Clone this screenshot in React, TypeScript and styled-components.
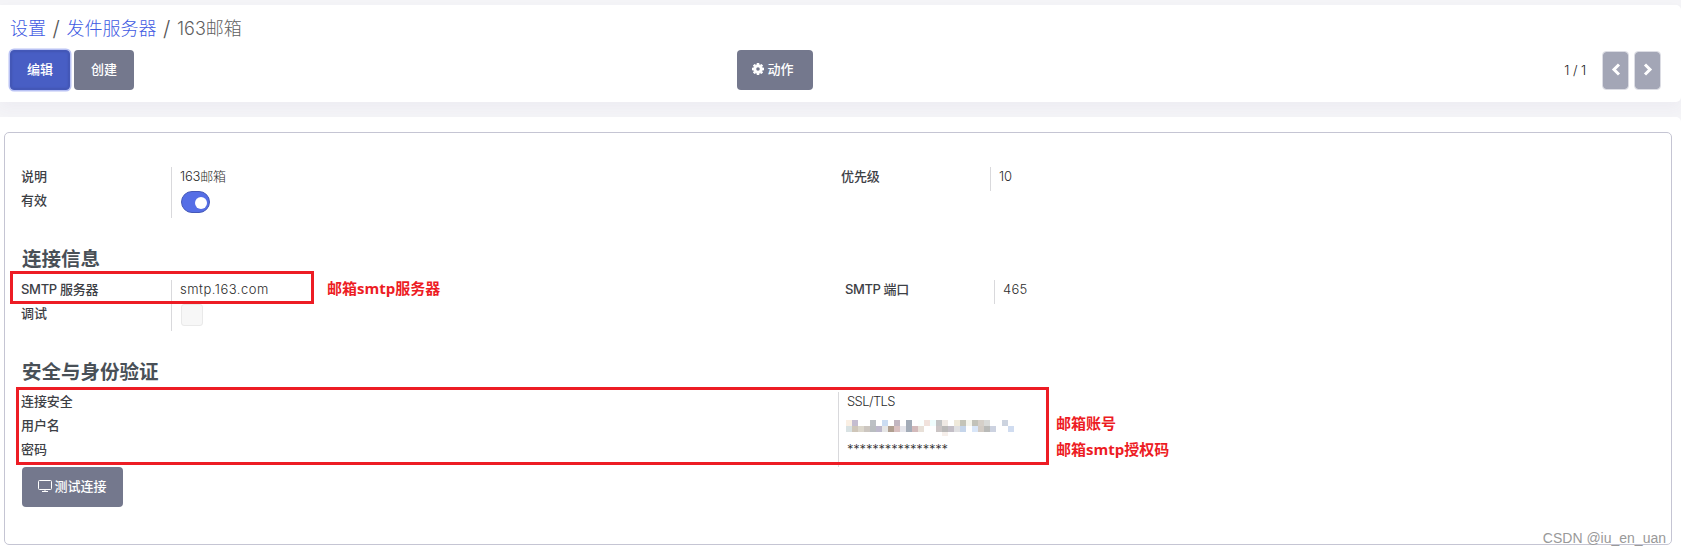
import React from "react";
import styled, { createGlobalStyle, css } from "styled-components";

const Global = createGlobalStyle`
  * { box-sizing: border-box; }
  body {
    margin: 0;
    background: #f4f4f7;
    color: #4b4f56;
    font: 300 13px/24px Inter, "Noto Sans CJK SC", sans-serif;
  }
`;

const Page = styled.div`
  height: 554px;
  padding-top: 5px;
  position: relative;
  overflow: hidden;
`;

const Header = styled.header`
  height: 97px;
  padding: 9px 20px 0 10px;
  background: #fff;
  border-radius: 0 5px 5px 0;
  box-shadow: 0 6px 14px rgba(90, 80, 140, 0.045);
`;

const Breadcrumb = styled.nav`
  display: flex;
  height: 28px;
  font-size: 18px;
  line-height: 29px;
  color: #5f5f5f;
  white-space: pre;
`;

const Crumb = styled.a`
  color: #4059e2;
`;

const Slash = styled.span`
  width: 20.5px;
  text-align: center;
  color: #555;
  font-size: 21px;
`;

const Toolbar = styled.div`
  display: grid;
  grid-template-columns: 727px 1fr auto;
  margin-top: 8px;
  height: 40px;
  align-items: center;
`;

const Buttons = styled.div<{ $indent?: number }>`
  display: flex;
  gap: 4px;
  margin-left: ${(p) => p.$indent ?? 0}px;
`;

const Button = styled.button<{ $primary?: boolean; $width: number }>`
  display: flex;
  align-items: center;
  justify-content: center;
  gap: 3px;
  width: ${(p) => p.$width}px;
  height: 40px;
  padding: 0 0 3px;
  border: 0;
  border-radius: 4px;
  background: #74788d;
  color: #fff;
  font: 500 13px/20px Inter, "Noto Sans CJK SC", sans-serif;
  ${(p) =>
    p.$primary &&
    css`
      background: #485ec4;
      border: 1px solid #4458b8;
      box-shadow: 0 0 0 1.5px #b9c2f4, inset 0 0 2px 1px #4256b2;
    `}
`;

const ActionButton = styled(Button)`
  padding-right: 4px;
`;

const TestButton = styled(Button)`
  gap: 1px;
  padding-right: 0;
`;

const Pager = styled.div`
  display: flex;
  align-items: center;
  gap: 5px;
`;

const PagerCount = styled.span`
  margin-right: 11px;
  color: #222;
  word-spacing: -0.2px;
`;

const PagerButton = styled.button`
  display: flex;
  align-items: center;
  justify-content: center;
  width: 27px;
  height: 39px;
  padding: 0 0 2px;
  border: 1px solid #dcdde4;
  border-radius: 4px;
  background: #a3a6b6;
  background-clip: padding-box;
`;

const Content = styled.main`
  height: 437px;
  margin-top: 15px;
  padding: 15px 9px 0 4px;
  background: #fff;
  border-radius: 0 5px 0 0;
  position: relative;
`;

const Sheet = styled.section`
  height: 413px;
  padding: 34px 16px 0 15px;
  border: 1px solid #c5c5d3;
  border-radius: 5px;
`;

const Columns = styled.div<{ $height: number; $left: number }>`
  display: grid;
  grid-template-columns: ${(p) => p.$left}px 1fr;
  align-items: start;
  height: ${(p) => p.$height}px;
`;

const Fields = styled.dl<{ $label: number }>`
  display: grid;
  grid-template-columns: ${(p) => p.$label}px 1fr;
  margin: 0;
`;

const Label = styled.dt`
  height: 24px;
  padding-left: 1px;
  line-height: 19px;
  font-weight: 500;
  letter-spacing: -0.1px;
  color: #3d4045;
`;

const Value = styled.dd<{ $tall?: boolean }>`
  height: ${(p) => (p.$tall ? 27 : 24)}px;
  margin: 0;
  padding-left: 8px;
  border-left: 1px solid #d9d9dc;
  line-height: 19px;
  color: #2c2c2c;
`;

const Text = styled.span<{ $spacing?: number }>`
  letter-spacing: ${(p) => p.$spacing ?? 0}px;
`;

const Title = styled.h2<{ $height: number }>`
  height: ${(p) => p.$height}px;
  margin: 0;
  padding: 3px 0 0 2px;
  font-size: 19.5px;
  line-height: 24px;
  font-weight: 700;
  color: #495057;
`;

const Switch = styled.span`
  display: flex;
  justify-content: flex-end;
  align-items: center;
  width: 29px;
  height: 22px;
  margin-left: 1px;
  padding-right: 2px;
  border: 1px solid #4659b8;
  border-radius: 11px;
  background: #556ee6;
`;

const Knob = styled.span`
  width: 12px;
  height: 12px;
  margin-top: 2px;
  border-radius: 50%;
  background: #fff;
`;

const Checkbox = styled.span`
  display: block;
  width: 22px;
  height: 22px;
  margin-left: 1px;
  border: 1px solid #e9e9e9;
  border-radius: 3px;
  background: #f7f7f7;
`;

const Mosaic = styled.svg`
  display: block;
  margin: 4px 0 0 -1px;
`;

const Highlight = styled.div<{ $x: number; $y: number; $w: number; $h: number }>`
  position: absolute;
  left: ${(p) => p.$x}px;
  top: ${(p) => p.$y}px;
  width: ${(p) => p.$w}px;
  height: ${(p) => p.$h}px;
  border: 3px solid #ed1c24;
`;

const Note = styled.span<{ $x: number; $y: number }>`
  position: absolute;
  left: ${(p) => p.$x}px;
  top: ${(p) => p.$y}px;
  color: #ed1c24;
  font: 700 15px/24px "Open Sans", "Noto Sans CJK SC", sans-serif;
  white-space: nowrap;
`;

const Watermark = styled.span`
  position: absolute;
  right: 15px;
  top: 526px;
  color: #999;
  font: 400 14px/24px "Liberation Sans", sans-serif;
`;

const topCells = ["#faefe3", "#c5bdd0", "", "", "#bcc0c4", "", "#cbdcf2", "", "#c2b6c0", "", "#a3acb8", "", "#fbfffe", "#f1e2dc", "#effdfd", "#c2c3c4", "#efe9e4", "", "#efe9da", "#c4c4b8", "#f5f5ed", "#c2c2b9", "#d5cfc8", "#d9dad8", "", "", "#ccd3df", ""];
const bottomCells = ["#d9e2e3", "#cfc6b9", "#dcd7cc", "#ccc6c0", "#b9bdc0", "#bdb8cc", "#e6e6e6", "#b09f90", "#d9c0c0", "#e6e6ec", "#a3acb8", "#d3babb", "#e8e0d8", "", "", "#cac4c4", "#bab9b8", "#c3bec6", "#e0e0e2", "#c5d5ea", "", "#d9e6f8", "#d2cbc4", "#b9bab8", "#ccd2e0", "", "", "#d0dcf0"];

const MaskedName = () => (
  <Mosaic width="170" height="16">
    {topCells.map((c, i) => c && <rect key={i} x={i * 6} y="0" width="6" height="6" fill={c} />)}
    {bottomCells.map((c, i) => c && <rect key={i} x={i * 6} y="6" width="6" height="6" fill={c} />)}
    <rect x="96" y="12" width="6" height="4" fill="#f6efeb" />
  </Mosaic>
);

const GearIcon = () => (
  <svg width="12" height="12" viewBox="-6 -6 12 12">
    <circle r="3.2" fill="none" stroke="#fff" strokeWidth="2.8" />
    {[0, 45, 90, 135].map((a) => (
      <path key={a} d="M-1.2-6h2.4l.3 2h-3zM-1.2 6h2.4l.3-2h-3z" fill="#fff" transform={`rotate(${a})`} />
    ))}
  </svg>
);

const MonitorIcon = () => (
  <svg width="15" height="13" viewBox="0 0 15 13" fill="none" stroke="#fff">
    <rect x="0.5" y="1.5" width="13" height="9" rx="1" />
    <path d="M4 12.5h6M7 10.5v2" />
  </svg>
);

const Chevron = ({ right }: { right?: boolean }) => (
  <svg width="10" height="13" viewBox="0 0 10 13" fill="none" stroke="#fff" strokeWidth="3">
    <path d={right ? "M2 1.5 7 6.5 2 11.5" : "M8 1.5 3 6.5 8 11.5"} />
  </svg>
);

export default function App() {
  return (
    <Page>
      <Global />
      <Header>
        <Breadcrumb>
          <Crumb>设置</Crumb>
          <Slash>/</Slash>
          <Crumb>发件服务器</Crumb>
          <Slash>/</Slash>
          <Text>163邮箱</Text>
        </Breadcrumb>
        <Toolbar>
          <Buttons>
            <Button $primary $width={60}>编辑</Button>
            <Button $width={60}>创建</Button>
          </Buttons>
          <ActionButton $width={76}>
            <GearIcon />
            动作
          </ActionButton>
          <Pager>
            <PagerCount>1 / 1</PagerCount>
            <PagerButton><Chevron /></PagerButton>
            <PagerButton><Chevron right /></PagerButton>
          </Pager>
        </Toolbar>
      </Header>
      <Content>
        <Sheet>
          <Columns $height={77} $left={820}>
            <Fields $label={151}>
              <Label>说明</Label>
              <Value><Text $spacing={-0.2}>163邮箱</Text></Value>
              <Label>有效</Label>
              <Value $tall><Switch><Knob /></Switch></Value>
            </Fields>
            <Fields $label={150}>
              <Label>优先级</Label>
              <Value>10</Value>
            </Fields>
          </Columns>
          <Title $height={36}>连接信息</Title>
          <Columns $height={77} $left={824}>
            <Fields $label={151}>
              <Label><Text $spacing={-0.3}>SMTP 服务器</Text></Label>
              <Value><Text $spacing={0.5}>smtp.163.com</Text></Value>
              <Label>调试</Label>
              <Value $tall><Checkbox /></Value>
            </Fields>
            <Fields $label={150}>
              <Label><Text $spacing={-0.4}>SMTP 端口</Text></Label>
              <Value><Text $spacing={0.2}>465</Text></Value>
            </Fields>
          </Columns>
          <Title $height={35}>安全与身份验证</Title>
          <Fields $label={818}>
            <Label>连接安全</Label>
            <Value><Text $spacing={-0.6}>SSL/TLS</Text></Value>
            <Label>用户名</Label>
            <Value><MaskedName /></Value>
            <Label>密码</Label>
            <Value $tall><Text $spacing={-0.2}>****************</Text></Value>
          </Fields>
          <Buttons $indent={2}>
            <TestButton $width={101}><MonitorIcon />测试连接</TestButton>
          </Buttons>
        </Sheet>
      </Content>
      <Highlight $x={10} $y={271} $w={304} $h={33} />
      <Highlight $x={16} $y={387} $w={1033} $h={78} />
      <Note $x={327} $y={276}>邮箱smtp服务器</Note>
      <Note $x={1056} $y={411}>邮箱账号</Note>
      <Note $x={1056} $y={437}>邮箱smtp授权码</Note>
      <Watermark>CSDN @iu_en_uan</Watermark>
    </Page>
  );
}
